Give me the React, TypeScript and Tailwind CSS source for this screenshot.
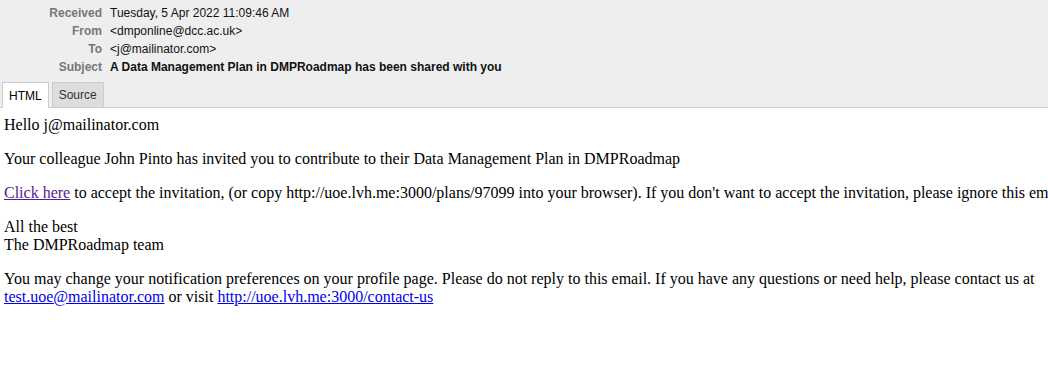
export default function App() {
  const headers = [
    { label: "Received", value: "Tuesday, 5 Apr 2022 11:09:46 AM", bold: false },
    { label: "From", value: "<dmponline@dcc.ac.uk>", bold: false },
    { label: "To", value: "<j@mailinator.com>", bold: false },
    { label: "Subject", value: "A Data Management Plan in DMPRoadmap has been shared with you", bold: true },
  ]

  return (
    <div className="w-[1048px] h-[387px] bg-white overflow-hidden">
      <div className="bg-[#eeeeee] border-b border-[#cccccc] h-[108px] pt-[4px] font-['Liberation_Sans',Arial,sans-serif] text-[12px]">
        {headers.map((h) => (
          <div key={h.label} className="flex h-[18px] items-center">
            <div className="w-[102px] text-right font-bold text-[#777777]">{h.label}</div>
            <div className={`ml-[8px] text-[#111111] ${h.bold ? "font-bold" : ""}`}>{h.value}</div>
          </div>
        ))}
        <div className="flex gap-[3px] pl-[2px] mt-[6px]">
          <div className="h-[26px] px-[6px] flex items-center bg-white border border-b-0 border-[#cccccc] text-black">
            HTML
          </div>
          <div className="h-[25px] px-[6px] flex items-center bg-[#dddddd] border border-b-0 border-[#cccccc] text-[#333333]">
            Source
          </div>
        </div>
      </div>
      <div className="pt-[8px] px-[4px] font-['Liberation_Serif','Times_New_Roman',serif] text-[16px] leading-[18px] text-black">
        <p>Hello j@mailinator.com</p>
        <p className="mt-[16px]">
          Your colleague John Pinto has invited you to contribute to their Data Management Plan in DMPRoadmap
        </p>
        <p className="mt-[16px] whitespace-nowrap">
          <a href="#" className="text-[#551a8b] underline">Click here</a> to accept the invitation, (or copy
          http://uoe.lvh.me:3000/plans/97099 into your browser). If you don't want to accept the invitation, please
          ignore this email.
        </p>
        <p className="mt-[16px]">
          All the best
          <br />
          The DMPRoadmap team
        </p>
        <p className="mt-[16px]">
          You may change your notification preferences on your profile page. Please do not reply to this email. If you
          have any questions or need help, please contact us at{" "}
          <a href="#" className="text-[#0000ee] underline">test.uoe@mailinator.com</a> or visit{" "}
          <a href="#" className="text-[#0000ee] underline">http://uoe.lvh.me:3000/contact-us</a>
        </p>
      </div>
    </div>
  )
}
